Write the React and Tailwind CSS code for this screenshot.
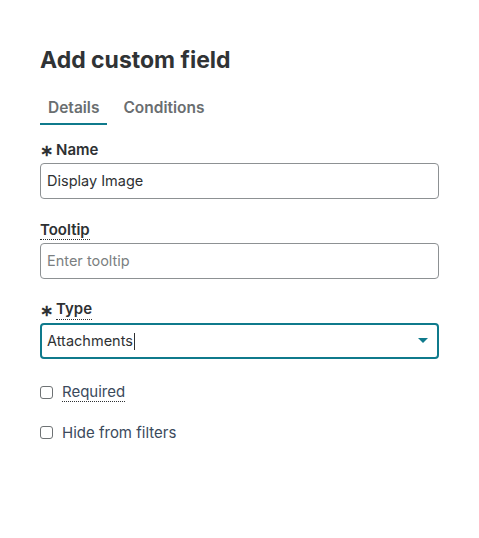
export default function App() {
  const font = { fontFamily: 'Inter, "Noto Sans", sans-serif' };

  return (
    <div className="min-h-[538px] w-[479px] bg-white text-[#2e3133]" style={font}>
      <div className="px-10 pt-[45px]">
        <h1 className="text-[23px] leading-[30px] font-bold text-[#303335]">Add custom field</h1>

        <div className="mt-[22px] flex gap-[16px] text-[15.5px] font-semibold text-[#6a6e70]">
          <div className="flex flex-col">
            <span className="px-[8px] leading-[22px]">Details</span>
            <span className="mt-[4px] h-[2px] bg-[#0f7a8c]" />
          </div>
          <div className="flex flex-col">
            <span className="leading-[22px]">Conditions</span>
          </div>
        </div>

        <div className="mt-[15px]">
          <div className="flex items-center gap-[3px] text-[15px] font-semibold leading-[20px] text-[#2e3133]">
            <span className="text-[16px] font-bold">∗</span>
            <span>Name</span>
          </div>
          <div className="mt-[3px] flex h-[36px] items-center rounded-[4px] border border-[#8d9193] px-[6px] text-[14.5px] text-[#2e3133]">
            Display Image
          </div>
        </div>

        <div className="mt-[21px]">
          <div className="text-[15px] font-semibold leading-[20px]">
            <span className="border-b border-dotted border-[#2e3133]">Tooltip</span>
          </div>
          <div className="mt-[3px] flex h-[36px] items-center rounded-[4px] border border-[#8d9193] px-[6px] text-[14.5px] text-[#7b7f81]">
            Enter tooltip
          </div>
        </div>

        <div className="mt-[20px]">
          <div className="flex items-center gap-[3px] text-[15px] font-semibold leading-[20px]">
            <span className="text-[16px] font-bold">∗</span>
            <span className="border-b border-dotted border-[#2e3133]">Type</span>
          </div>
          <div className="mt-[3px] flex h-[36px] items-center justify-between rounded-[4px] border-2 border-[#0f7a8c] pl-[5px] pr-[9px] text-[14.5px]">
            <span className="flex items-center">
              Attachments<span className="ml-px inline-block h-[17px] w-px bg-[#2e3133]" />
            </span>
            <svg width="10" height="6" viewBox="0 0 10 6">
              <path d="M0 0h10L5 5z" fill="#0f7a8c" />
            </svg>
          </div>
        </div>

        <div className="mt-[24px] flex items-center gap-[9px] text-[15px] text-[#3b4a5c]">
          <span className="h-[13px] w-[13px] rounded-[3px] border border-[#6e7274]" />
          <span className="border-b border-dotted border-[#2e3133] leading-[18px]">Required</span>
        </div>

        <div className="mt-[21px] flex items-center gap-[9px] text-[15px] text-[#3b4a5c]">
          <span className="h-[13px] w-[13px] rounded-[3px] border border-[#6e7274]" />
          <span className="leading-[19px]">Hide from filters</span>
        </div>
      </div>
    </div>
  );
}
